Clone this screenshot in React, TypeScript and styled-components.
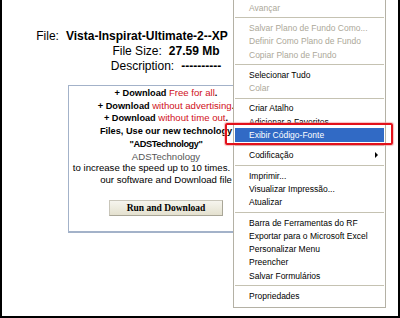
import * as React from 'react';
import styled, {createGlobalStyle} from 'styled-components';

const GlobalStyle = createGlobalStyle`
    html, body {
        margin: 0;
        padding: 0;
        background: #ffffff;
    }
`;

type MenuEntry =
    | {kind: 'item'; label: string; disabled?: boolean; active?: boolean; submenu?: boolean}
    | {kind: 'sep'};

const menuEntries: MenuEntry[] = [
    {kind: 'item', label: 'Avançar', disabled: true},
    {kind: 'sep'},
    {kind: 'item', label: 'Salvar Plano de Fundo Como...', disabled: true},
    {kind: 'item', label: 'Definir Como Plano de Fundo', disabled: true},
    {kind: 'item', label: 'Copiar Plano de Fundo', disabled: true},
    {kind: 'sep'},
    {kind: 'item', label: 'Selecionar Tudo'},
    {kind: 'item', label: 'Colar', disabled: true},
    {kind: 'sep'},
    {kind: 'item', label: 'Criar Atalho'},
    {kind: 'item', label: 'Adicionar a Favoritos...'},
    {kind: 'item', label: 'Exibir Código-Fonte', active: true},
    {kind: 'sep'},
    {kind: 'item', label: 'Codificação', submenu: true},
    {kind: 'sep'},
    {kind: 'item', label: 'Imprimir...'},
    {kind: 'item', label: 'Visualizar Impressão...'},
    {kind: 'item', label: 'Atualizar'},
    {kind: 'sep'},
    {kind: 'item', label: 'Barra de Ferramentas do RF'},
    {kind: 'item', label: 'Exportar para o Microsoft Excel'},
    {kind: 'item', label: 'Personalizar Menu'},
    {kind: 'item', label: 'Preencher'},
    {kind: 'item', label: 'Salvar Formulários'},
    {kind: 'sep'},
    {kind: 'item', label: 'Propriedades'},
];

const App = () => {
    return (
        <Frame>
            <GlobalStyle />
            <Page>
                <FileInfo>
                    {/* the rest of the file name is hidden under the menu */}
                    <InfoLine trail={68}>
                        <Label>File:</Label>
                        <Strong>Vista-Inspirat-Ultimate-2--XP</Strong>
                    </InfoLine>
                    <InfoLine>
                        <Label>File Size:</Label>
                        <Strong>27.59 Mb</Strong>
                    </InfoLine>
                    <InfoLine>
                        <Label>Description:</Label>
                        <Strong>----------</Strong>
                    </InfoLine>
                </FileInfo>

                <PromoBox>
                    <PromoLine>
                        <B>+ Download </B>
                        <Red>Free for all</Red>
                        <B>.</B>
                    </PromoLine>
                    <PromoLine>
                        <B>+ Download </B>
                        <Red>without advertising</Red>
                        <B>.</B>
                    </PromoLine>
                    <PromoLine>
                        <B>+ Download </B>
                        <Red>without time out</Red>
                        <B>.</B>
                    </PromoLine>
                    <PromoLine>
                        <B>Files, Use our new technology</B>
                    </PromoLine>
                    <PromoLine>
                        <B tight>"ADSTechnology"</B>
                    </PromoLine>
                    <PromoLine muted>ADSTechnology</PromoLine>
                    <PromoLine trail={29}>to increase the speed up to 10 times.</PromoLine>
                    <PromoLine>our software and Download file</PromoLine>
                    <RunButton type="button">Run and Download</RunButton>
                </PromoBox>
            </Page>

            <ContextMenu>
                {menuEntries.map((entry, i) =>
                    entry.kind === 'sep' ? (
                        <Separator key={i} />
                    ) : (
                        <MenuItem key={i} disabled={entry.disabled} active={entry.active}>
                            <span>{entry.label}</span>
                            {entry.submenu && <SubArrow />}
                        </MenuItem>
                    ),
                )}
            </ContextMenu>

            <Highlight />
        </Frame>
    );
};

const Frame = styled.div`
    position: relative;
    width: 400px;
    height: 318px;
    box-sizing: border-box;
    border-left: 2px solid #000;
    border-right: 2px solid #000;
    border-bottom: 2px solid #000;
    overflow: hidden;
    background: #fff;
`;

const Page = styled.div`
    width: 328px;
    padding-top: 29px;
    display: flex;
    flex-direction: column;
    align-items: center;
    font-family: 'Liberation Sans', Arial, sans-serif;
    color: #000;
`;

const FileInfo = styled.div`
    display: flex;
    flex-direction: column;
    align-items: center;
    font-size: 12px;
    line-height: 15px;
`;

const InfoLine = styled.div<{trail?: number}>`
    white-space: nowrap;
    text-align: center;
    padding-right: ${(p) => p.trail ?? 0}px;
`;

const Label = styled.span`
    margin-right: 7px;
`;

const Strong = styled.span`
    font-weight: bold;
`;

const PromoBox = styled.div`
    margin-top: 11px;
    width: 196px;
    box-sizing: border-box;
    border: 1px solid #a3b2c9;
    border-bottom-width: 2px;
    padding: 1px 0 15px;
    display: flex;
    flex-direction: column;
    align-items: center;
    font-size: 9.6px;
    line-height: 11.7px;
`;

const PromoLine = styled.div<{muted?: boolean; trail?: number}>`
    white-space: nowrap;
    text-align: center;
    padding-right: ${(p) => p.trail ?? 0}px;
    color: ${(p) => (p.muted ? '#555555' : '#000000')};
`;

const B = styled.span<{tight?: boolean}>`
    font-weight: bold;
    font-size: 9.2px;
    letter-spacing: ${(p) => (p.tight ? '-0.4px' : '0')};
`;

const Red = styled.span`
    color: #d0101a;
`;

const RunButton = styled.button`
    margin-top: 14px;
    width: 114px;
    height: 16px;
    padding: 0;
    border: 1px solid #c9c6ba;
    border-right-color: #a9a697;
    border-bottom-color: #a9a697;
    background: linear-gradient(#f6f5ee, #e4e1cf);
    font-family: 'Liberation Serif', 'Times New Roman', serif;
    font-weight: bold;
    font-size: 9.5px;
    color: #000;
`;

const ContextMenu = styled.div`
    position: absolute;
    left: 231px;
    top: -2px;
    width: 153px;
    box-sizing: border-box;
    border: 1px solid #b4b1a5;
    padding: 2px 1px 4px;
    background: #ffffff;
    font-family: 'Liberation Sans', Tahoma, sans-serif;
    font-size: 8.5px;
`;

const MenuItem = styled.div<{disabled?: boolean; active?: boolean}>`
    height: 13.3px;
    padding: 0 6px 0 14px;
    display: flex;
    align-items: center;
    justify-content: space-between;
    white-space: nowrap;
    color: ${(p) => (p.active ? '#ffffff' : p.disabled ? '#aca899' : '#000000')};
    background: ${(p) => (p.active ? '#316ac5' : 'transparent')};
`;

const SubArrow = styled.span`
    width: 0;
    height: 0;
    border-top: 3px solid transparent;
    border-bottom: 3px solid transparent;
    border-left: 3px solid #000;
`;

const Separator = styled.div`
    height: 7px;
    display: flex;
    align-items: center;

    &::before {
        content: '';
        flex: 1;
        height: 1px;
        background: #c5c2b2;
    }
`;

const Highlight = styled.div`
    position: absolute;
    left: 223px;
    top: 123px;
    width: 168px;
    height: 22px;
    box-sizing: border-box;
    border: 2px solid #e3111b;
    border-radius: 2px;
    box-shadow: 0 0 1px 1px rgba(240, 150, 150, 0.6);
`;

export default App;
